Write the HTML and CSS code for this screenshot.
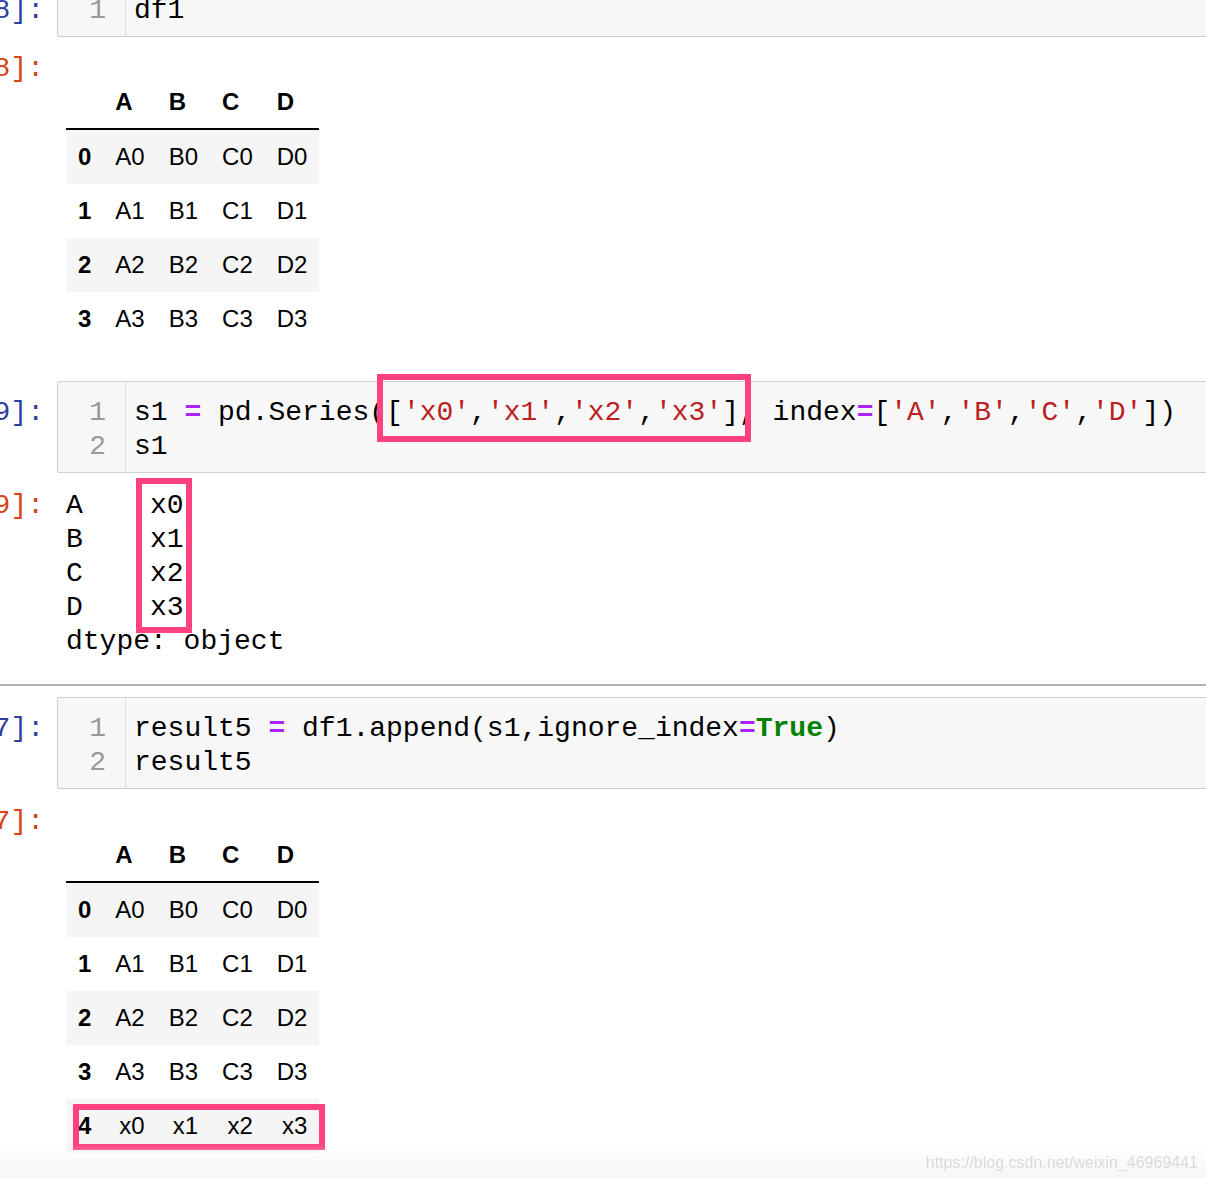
FILE: index.html
```html
<!DOCTYPE html>
<html>
<head>
<meta charset="utf-8">
<title>Notebook</title>
<link rel="stylesheet" href="styles.css">
</head>
<body>
<div class="nb">
  <div class="cell first">
    <div class="row">
      <div class="prompt prompt-in"><span>In [38]:</span></div>
      <div class="editor">
        <div class="gutter"><div>1</div></div>
        <div class="code"><div>df1</div></div>
      </div>
    </div>
    <div class="row out out-table">
      <div class="prompt prompt-out"><span>Out[38]:</span></div>
      <div class="out-body">
        <div class="tablewrap">
          <table class="df">
            <thead>
              <tr><th></th><th>A</th><th>B</th><th>C</th><th>D</th></tr>
            </thead>
            <tbody>
              <tr><th>0</th><td>A0</td><td>B0</td><td>C0</td><td>D0</td></tr>
              <tr><th>1</th><td>A1</td><td>B1</td><td>C1</td><td>D1</td></tr>
              <tr><th>2</th><td>A2</td><td>B2</td><td>C2</td><td>D2</td></tr>
              <tr><th>3</th><td>A3</td><td>B3</td><td>C3</td><td>D3</td></tr>
            </tbody>
          </table>
        </div>
      </div>
    </div>
  </div>

  <div class="cell second">
    <div class="row">
      <div class="prompt prompt-in"><span>In [39]:</span></div>
      <div class="editor">
        <div class="gutter"><div>1</div><div>2</div></div>
        <div class="code"><div>s1 <span class="op">=</span> pd.Series(<span class="hl">[<span class="str">'x0'</span>,<span class="str">'x1'</span>,<span class="str">'x2'</span>,<span class="str">'x3'</span>]</span>, index<span class="op">=</span>[<span class="str">'A'</span>,<span class="str">'B'</span>,<span class="str">'C'</span>,<span class="str">'D'</span>])</div><div>s1</div></div>
      </div>
    </div>
    <div class="row out out-stream">
      <div class="prompt prompt-out"><span>Out[39]:</span></div>
      <div class="out-body">
<pre class="stream">A    x0
B    x1
C    x2
D    x3
dtype: object</pre>
      </div>
    </div>
  </div>

  <div class="separator"></div>

  <div class="cell third">
    <div class="row">
      <div class="prompt prompt-in"><span>In [47]:</span></div>
      <div class="editor">
        <div class="gutter"><div>1</div><div>2</div></div>
        <div class="code"><div>result5 <span class="op">=</span> df1.append(s1,ignore_index<span class="op">=</span><span class="kw">True</span>)</div><div>result5</div></div>
      </div>
    </div>
    <div class="row out out-table3">
      <div class="prompt prompt-out"><span>Out[47]:</span></div>
      <div class="out-body">
        <div class="tablewrap marked">
          <table class="df">
            <thead>
              <tr><th></th><th>A</th><th>B</th><th>C</th><th>D</th></tr>
            </thead>
            <tbody>
              <tr><th>0</th><td>A0</td><td>B0</td><td>C0</td><td>D0</td></tr>
              <tr><th>1</th><td>A1</td><td>B1</td><td>C1</td><td>D1</td></tr>
              <tr><th>2</th><td>A2</td><td>B2</td><td>C2</td><td>D2</td></tr>
              <tr><th>3</th><td>A3</td><td>B3</td><td>C3</td><td>D3</td></tr>
              <tr><th>4</th><td>x0</td><td>x1</td><td>x2</td><td>x3</td></tr>
            </tbody>
          </table>
        </div>
      </div>
    </div>
  </div>
</div>
<div class="fade"><span class="watermark">https://blog.csdn.net/weixin_46969441</span></div>
</body>
</html>
```

FILE: styles.css
```css
html, body {
  margin: 0;
  padding: 0;
  background: #ffffff;
  overflow: hidden;
}

body {
  font-family: "Liberation Mono", "Courier New", monospace;
  color: #000;
}

.nb {
  display: flex;
  flex-direction: column;
}

.cell {
  display: flex;
  flex-direction: column;
}

.cell.first { margin-top: -21px; }
.cell.second { margin-top: 35px; }
.cell.third { margin-top: 11px; }

.row {
  display: flex;
  align-items: flex-start;
}

.out-table { margin-top: 15px; }
.out-stream { margin-top: 16px; }
.out-table3 { margin-top: 16px; }

.prompt {
  flex: 0 0 44px;
  width: 44px;
  display: flex;
  justify-content: flex-end;
  overflow: hidden;
  white-space: pre;
  font-family: "Liberation Mono", "Courier New", monospace;
  font-size: 28px;
  line-height: 34px;
}

.prompt-in {
  color: #303F9F;
  padding-top: 15px;
}

.prompt-out {
  color: #D84315;
}

.editor {
  flex: 1 1 auto;
  margin-left: 13px;
  margin-right: -20px;
  display: flex;
  border: 1px solid #cfcfcf;
  border-radius: 2px;
  background: #f7f7f7;
}

.gutter {
  flex: 0 0 68px;
  box-sizing: border-box;
  border-right: 1px solid #dddddd;
  padding: 14px 19px 8px 0;
  text-align: right;
  color: #999999;
  font-family: "Liberation Mono", "Courier New", monospace;
  font-size: 28px;
  line-height: 34px;
}

.code {
  flex: 1 1 auto;
  padding: 14px 0 8px 8px;
  white-space: pre;
  font-family: "Liberation Mono", "Courier New", monospace;
  font-size: 28px;
  line-height: 34px;
  color: #000;
}

.op {
  color: #AA22FF;
  font-weight: bold;
}

.str {
  color: #BA2121;
}

.kw {
  color: #008000;
  font-weight: bold;
}

.hl {
  position: relative;
}

.hl::after {
  content: "";
  position: absolute;
  left: -9px;
  right: -12px;
  top: -23px;
  bottom: -14px;
  border: 6px solid #ff4180;
  box-sizing: border-box;
}

.out-body {
  flex: 1 1 auto;
  margin-left: 22px;
  display: flex;
  flex-direction: column;
  align-items: flex-start;
}

.tablewrap {
  position: relative;
  margin-top: 24px;
}

.tablewrap.marked::after {
  content: "";
  position: absolute;
  left: 7px;
  right: -6px;
  bottom: 3px;
  height: 46px;
  border: 6px solid #ff4180;
  box-sizing: border-box;
}

.df {
  border-collapse: separate;
  border-spacing: 0;
  font-family: "Liberation Sans", Arial, sans-serif;
  font-size: 24px;
  color: #000;
}

.df th,
.df td {
  padding: 12px;
  line-height: 30px;
  vertical-align: middle;
  white-space: nowrap;
}

.df thead th {
  line-height: 28px;
  border-bottom: 2px solid #000;
  text-align: left;
  font-weight: bold;
}

.df tbody th {
  text-align: left;
  font-weight: bold;
}

.df td {
  text-align: right;
}

.df tbody tr:nth-child(odd) {
  background: #f5f5f5;
}

.stream {
  position: relative;
  margin: 0;
  font-family: "Liberation Mono", "Courier New", monospace;
  font-size: 28px;
  line-height: 34px;
  color: #000;
}

.stream::after {
  content: "";
  position: absolute;
  left: 70px;
  top: -11px;
  width: 56px;
  height: 155px;
  border: 6px solid #ff4180;
  box-sizing: border-box;
}

.separator {
  margin-top: 25px;
  height: 2px;
  background: #b3b3b3;
}

.fade {
  position: fixed;
  left: 0;
  right: 0;
  bottom: 0;
  height: 34px;
  background: linear-gradient(to bottom, rgba(246, 246, 246, 0), #f6f6f6);
  display: flex;
  justify-content: flex-end;
  align-items: flex-end;
  padding: 0 8px 6px 0;
  box-sizing: border-box;
}

.watermark {
  font-family: "Liberation Sans", Arial, sans-serif;
  font-size: 16px;
  line-height: 18px;
  color: #dadada;
}
```
